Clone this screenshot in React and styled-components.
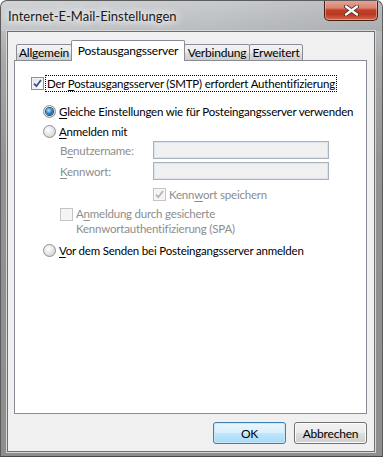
import styled, { createGlobalStyle } from 'styled-components'

const GlobalStyle = createGlobalStyle`
  html, body {
    margin: 0;
    padding: 0;
    background: #ffffff;
  }
  body {
    font-family: "Segoe UI", Lato, "Open Sans", sans-serif;
    font-size: 11.5px;
    letter-spacing: -0.2px;
  }
`

const Window = styled.div`
  width: 383px;
  height: 457px;
  box-sizing: border-box;
  border: 1px solid #5c5c5c;
  border-bottom-color: #4a4a4a;
  border-radius: 7px 7px 0 0;
  background: linear-gradient(180deg, #c9cccf 0px, #b9bcbf 30px, #a6a8aa 60px, #939393 160px, #8e8e8e 100%);
  display: flex;
  flex-direction: column;
  overflow: hidden;
`

const TitleBar = styled.div`
  height: 30px;
  display: flex;
  align-items: flex-start;
  padding-left: 7px;
  padding-right: 4px;
  background: linear-gradient(90deg, rgba(255,255,255,0.15) 0%, rgba(255,255,255,0) 55%, rgba(0,0,0,0.08) 100%);
`

const Title = styled.div`
  margin-top: 7px;
  font-size: 13px;
  letter-spacing: 0;
  color: #1a1a1a;
  padding: 0 4px 0 0;
  text-shadow: 0 0 6px #f4f4f4, 0 0 10px #f4f4f4, 0 0 14px #eeeeee;
`

const CloseButton = styled.div`
  margin-left: auto;
  margin-top: -1px;
  width: 54px;
  height: 21px;
  box-sizing: border-box;
  border: 1px solid #4d1d14;
  border-top: none;
  border-radius: 0 0 5px 5px;
  background: linear-gradient(180deg, #e8a898 0%, #d88470 40%, #c2402a 50%, #b83a24 72%, #d46a4e 100%);
  box-shadow: inset 0 0 0 1px rgba(255, 210, 190, 0.45);
  display: flex;
  align-items: center;
  justify-content: center;
`

const Client = styled.div`
  flex: 1;
  margin: 0 7px 4px 6px;
  background: #f0f0f0;
  border: 1px solid #6f6f6f;
  box-shadow: 0 0 0 1px #d8d8d8;
  display: flex;
  flex-direction: column;
  padding: 8px 7px 0 6px;
`

const TabStrip = styled.div`
  display: flex;
  align-items: flex-end;
  height: 21px;
  padding-left: 2px;
  position: relative;
  z-index: 1;
  margin-bottom: -1px;
`

const Tab = styled.div`
  box-sizing: border-box;
  width: ${p => p.$w}px;
  height: ${p => (p.$active ? 21 : 17)}px;
  margin-left: ${p => (p.$first ? 0 : -1)}px;
  border: 1px solid #898c95;
  border-bottom: ${p => (p.$active ? 'none' : '1px solid #898c95')};
  border-radius: 2px 2px 0 0;
  background: ${p => (p.$active ? '#ffffff' : 'linear-gradient(180deg, #f3f3f3 0%, #ebebeb 50%, #dddddd 51%, #cfcfcf 100%)')};
  color: #000;
  font-size: 12px;
  display: flex;
  align-items: ${p => (p.$active ? 'flex-start' : 'center')};
  padding-top: ${p => (p.$active ? 2 : 0)}px;
  justify-content: center;
  white-space: nowrap;
  position: relative;
  z-index: ${p => (p.$active ? 2 : 1)};
`

const Panel = styled.div`
  height: 354px;
  box-sizing: border-box;
  background: #ffffff;
  border: 1px solid #898c95;
  display: flex;
  flex-direction: column;
  padding: 14px 0 0 16px;
`

const Row = styled.div`
  display: flex;
  align-items: center;
  min-height: ${p => p.$h || 16}px;
  margin-top: ${p => p.$mt || 0}px;
  padding-left: ${p => p.$indent || 0}px;
  color: ${p => (p.$disabled ? '#8d8d8d' : '#000')};
  white-space: nowrap;
`

const MultiRow = styled(Row)`
  align-items: flex-start;
  white-space: normal;
`

const Label = styled.span`
  line-height: 15px;
  margin-left: 3px;
`

const FocusLabel = styled(Label)`
  margin-left: 2px;
  padding: 0 1px;
  outline: 1px dotted #000;
  outline-offset: 0px;
`

const FieldLabel = styled.span`
  width: 93px;
  color: #8d8d8d;
`

const AccessKey = styled.u`
  text-decoration: underline;
  text-underline-offset: 2px;
`

const TextField = styled.div`
  width: 176px;
  height: 18px;
  box-sizing: border-box;
  border: 1px solid #a9b3bf;
  box-shadow: inset 0 0 0 1px #dde3ea;
  background: #f0f0f0;
`

const Box = styled.span`
  width: 13px;
  height: 13px;
  box-sizing: border-box;
  flex: none;
  border: 1px solid ${p => (p.$disabled ? '#c4c4c4' : '#8e8f8f')};
  background: ${p => (p.$disabled ? '#f4f4f4' : 'linear-gradient(135deg, #dcdee1 0%, #f6f6f6 60%, #ffffff 100%)')};
  box-shadow: inset 0 0 0 1px ${p => (p.$disabled ? '#f7f7f7' : '#f4f4f4')};
  display: flex;
  align-items: center;
  justify-content: center;
  margin-top: ${p => p.$mt || 0}px;
`

const Radio = styled.span`
  width: 13px;
  height: 13px;
  box-sizing: border-box;
  flex: none;
  border-radius: 50%;
  border: 1px solid #8e8f8f;
  background: radial-gradient(circle at 40% 35%, #ffffff 0%, #e8e8e8 45%, #c9c9c9 100%);
  display: flex;
  align-items: center;
  justify-content: center;
`

const RadioDot = styled.span`
  width: 7px;
  height: 7px;
  border-radius: 50%;
  background: radial-gradient(circle at 40% 35%, #bfe9ff 0%, #3d97d8 40%, #145a9e 75%, #0c3d73 100%);
  box-shadow: 0 0 0 1px #1d4f86;
`

const Footer = styled.div`
  display: flex;
  justify-content: flex-end;
  gap: 8px;
  margin-top: 8px;
`

const Button = styled.button`
  width: 73px;
  height: 22px;
  box-sizing: border-box;
  border-radius: 3px;
  font-family: inherit;
  font-size: 12px;
  letter-spacing: -0.2px;
  color: #000;
  padding: 0;
  border: 1px solid ${p => (p.$default ? '#3c7fb1' : '#707070')};
  background: ${p =>
    p.$default
      ? 'linear-gradient(180deg, #eaf6fd 0%, #d9f0fc 50%, #bee6fd 51%, #a7d9f5 100%)'
      : 'linear-gradient(180deg, #f2f2f2 0%, #ebebeb 50%, #dddddd 51%, #cfcfcf 100%)'};
  box-shadow: inset 0 0 0 1px ${p => (p.$default ? '#cbe8f8' : '#fcfcfc')};
`

function CheckBox({ checked, disabled, mt }) {
  return (
    <Box $disabled={disabled} $mt={mt}>
      {checked && (
        <svg width="9" height="9" viewBox="0 0 9 9">
          <path
            d="M1 4.6 L3.4 7.2 L8 1"
            fill="none"
            stroke={disabled ? '#b5b5b5' : '#3a4f8f'}
            strokeWidth="1.8"
          />
        </svg>
      )}
    </Box>
  )
}

function RadioButton({ checked }) {
  return <Radio>{checked && <RadioDot />}</Radio>
}

const tabs = [
  { label: 'Allgemein', w: 56 },
  { label: 'Postausgangsserver', w: 114, active: true },
  { label: 'Verbindung', w: 66 },
  { label: 'Erweitert', w: 54 },
]

export default function App() {
  return (
    <>
      <GlobalStyle />
      <Window>
        <TitleBar>
          <Title>Internet-E-Mail-Einstellungen</Title>
          <CloseButton>
            <svg width="15" height="11" viewBox="0 0 15 11">
              <path d="M2 1.5 L13 9.5 M13 1.5 L2 9.5" stroke="#4a2a22" strokeWidth="4" strokeLinecap="round" />
              <path d="M2 1.5 L13 9.5 M13 1.5 L2 9.5" stroke="#ffffff" strokeWidth="2.4" strokeLinecap="round" />
            </svg>
          </CloseButton>
        </TitleBar>
        <Client>
          <TabStrip>
            {tabs.map((t, i) => (
              <Tab key={t.label} $w={t.w} $active={t.active} $first={i === 0}>
                {t.label}
              </Tab>
            ))}
          </TabStrip>
          <Panel>
            <Row>
              <CheckBox checked />
              <FocusLabel>
                Der <AccessKey>P</AccessKey>ostausgangsserver (SMTP) erfordert Authentifizierung
              </FocusLabel>
            </Row>
            <Row $mt={12} $indent={12}>
              <RadioButton checked />
              <Label>
                <AccessKey>G</AccessKey>leiche Einstellungen wie für Posteingangsserver verwenden
              </Label>
            </Row>
            <Row $mt={4} $indent={12}>
              <RadioButton />
              <Label>
                <AccessKey>A</AccessKey>nmelden mit
              </Label>
            </Row>
            <Row $mt={2} $h={18} $indent={29}>
              <FieldLabel>
                B<AccessKey>e</AccessKey>nutzername:
              </FieldLabel>
              <TextField />
            </Row>
            <Row $mt={3} $h={18} $indent={29}>
              <FieldLabel>
                <AccessKey>K</AccessKey>ennwort:
              </FieldLabel>
              <TextField />
            </Row>
            <Row $mt={6} $indent={122} $disabled>
              <CheckBox checked disabled />
              <Label>
                Kenn<AccessKey>w</AccessKey>ort speichern
              </Label>
            </Row>
            <MultiRow $mt={4} $indent={29} $disabled>
              <CheckBox disabled mt={2} />
              <Label>
                A<AccessKey>n</AccessKey>meldung durch gesicherte
                <br />
                Kennwortauthentifizierung (SPA)
              </Label>
            </MultiRow>
            <Row $mt={6} $indent={12}>
              <RadioButton />
              <Label>
                <AccessKey>V</AccessKey>or dem Senden bei Posteingangsserver anmelden
              </Label>
            </Row>
          </Panel>
          <Footer>
            <Button $default>OK</Button>
            <Button>Abbrechen</Button>
          </Footer>
        </Client>
      </Window>
    </>
  )
}
